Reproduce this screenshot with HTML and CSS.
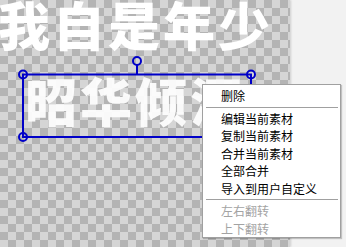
FILE: index.html
```html
<!DOCTYPE html>
<html>
<head>
<meta charset="utf-8">
<link rel="stylesheet" href="styles.css">
</head>
<body>
<div class="app">
  <div class="canvas">
    <div class="line line1">我自是年少</div>
    <div class="line line2">昭华倾泻</div>
    <svg class="sel" width="290" height="247" viewBox="0 0 290 247">
      <rect x="23" y="74.5" width="228" height="62.5" fill="none" stroke="#0000c8" stroke-width="2"/>
      <line x1="137" y1="65" x2="137" y2="74" stroke="#0000c8" stroke-width="2"/>
      <circle cx="137" cy="61" r="4" fill="none" stroke="#0000c8" stroke-width="2"/>
      <circle cx="23" cy="74.5" r="4" fill="none" stroke="#0000c8" stroke-width="2"/>
      <circle cx="251" cy="74.5" r="4" fill="none" stroke="#0000c8" stroke-width="2"/>
      <circle cx="23" cy="137" r="4" fill="none" stroke="#0000c8" stroke-width="2"/>
      <circle cx="251" cy="137" r="4" fill="none" stroke="#0000c8" stroke-width="2"/>
    </svg>
  </div>
  <div class="side"></div>
  <div class="menu">
    <div class="item">删除</div>
    <div class="sep"></div>
    <div class="item">编辑当前素材</div>
    <div class="item">复制当前素材</div>
    <div class="item">合并当前素材</div>
    <div class="item">全部合并</div>
    <div class="item">导入到用户自定义</div>
    <div class="sep"></div>
    <div class="item disabled">左右翻转</div>
    <div class="item disabled">上下翻转</div>
  </div>
</div>
</body>
</html>
```
FILE: styles.css
```css
html, body {
  margin: 0;
  padding: 0;
}
body {
  width: 346px;
  height: 247px;
  overflow: hidden;
  font-family: "Noto Sans CJK SC", "Noto Sans", sans-serif;
}
.app {
  position: relative;
  display: flex;
  width: 346px;
  height: 247px;
}
.canvas {
  position: relative;
  width: 290px;
  height: 247px;
  overflow: hidden;
  background-color: #d5d5d5;
  background-image:
    linear-gradient(45deg, #b4b4b4 25%, transparent 25%, transparent 75%, #b4b4b4 75%),
    linear-gradient(45deg, #b4b4b4 25%, transparent 25%, transparent 75%, #b4b4b4 75%);
  background-size: 16px 16px;
  background-position: 0 0, 8px 8px;
  box-shadow: 1px 0 2px rgba(0,0,0,0.15);
}
.side {
  flex: 1;
  background: #f2f2f2;
}
.line {
  position: absolute;
  color: #fff;
  font-weight: 900;
  font-size: 52px;
  line-height: 1;
  letter-spacing: 3px;
  white-space: nowrap;
}
.line1 {
  left: -2px;
  top: -2px;
}
.line2 {
  left: 25px;
  top: 74px;
  opacity: 0.92;
}
.sel {
  position: absolute;
  left: 0;
  top: 0;
}
.menu {
  position: absolute;
  left: 202px;
  top: 84px;
  width: 139px;
  height: 154px;
  box-sizing: border-box;
  background: #fff;
  border: 1px solid #a0a0a0;
  box-shadow: 1px 1px 1px rgba(0,0,0,0.2);
  padding: 2px 1px 1px 2px;
}
.item {
  height: 17.5px;
  line-height: 17.5px;
  padding-left: 16px;
  font-size: 12px;
  color: #000;
  white-space: nowrap;
}
.item.disabled {
  color: #a3a3a3;
}
.sep {
  height: 1px;
  background: #a0a0a0;
  margin: 2px 1px 2px 1px;
}
```
